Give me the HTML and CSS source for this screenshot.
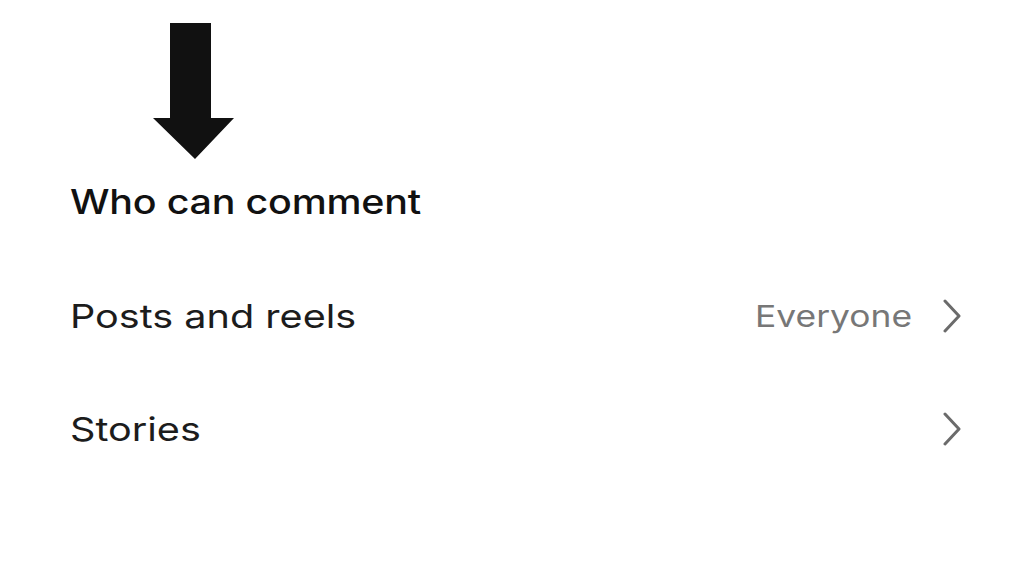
FILE: index.html
```html
<!DOCTYPE html>
<html lang="en">
<head>
<meta charset="utf-8">
<title>Who can comment</title>
<link rel="stylesheet" href="styles.css">
</head>
<body>
<main class="page">
  <div class="arrow-wrap">
    <svg class="arrow" width="82" height="137" viewBox="0 0 82 137" aria-hidden="true">
      <polygon points="17,0 58,0 58,95 81,95 42,136 0,95 17,95" fill="#111"/>
    </svg>
  </div>
  <h2 class="section-title"><span class="stretch">Who can comment</span></h2>
  <ul class="settings">
    <li class="row">
      <span class="label">Posts and reels</span>
      <span class="right">
        <span class="value">Everyone</span>
        <svg class="chev" width="20" height="34" viewBox="0 0 20 34" aria-hidden="true"><polyline points="3,2 17,17 3,32" fill="none" stroke="#6b6b6b" stroke-width="3" stroke-linecap="round" stroke-linejoin="round"/></svg>
      </span>
    </li>
    <li class="row">
      <span class="label">Stories</span>
      <span class="right">
        <svg class="chev" width="20" height="34" viewBox="0 0 20 34" aria-hidden="true"><polyline points="3,2 17,17 3,32" fill="none" stroke="#6b6b6b" stroke-width="3" stroke-linecap="round" stroke-linejoin="round"/></svg>
      </span>
    </li>
  </ul>
</main>
</body>
</html>
```
FILE: styles.css
```css
html, body {
  margin: 0;
  padding: 0;
  background: #fff;
}
body {
  font-family: Inter, "Noto Sans", "Liberation Sans", sans-serif;
  color: #111;
  width: 1024px;
  height: 576px;
  overflow: hidden;
}
.page {
  padding: 0 62px 0 70px;
}
.arrow-wrap {
  padding: 23px 0 0 83px;
  height: 137px;
}
.arrow {
  display: block;
}
.section-title {
  margin: 20px 0 0;
  font-size: 34px;
  font-weight: 500;
  line-height: 44px;
  letter-spacing: -0.2px;
  color: #111;
}
.stretch {
  display: inline-block;
  transform: scaleX(1.16);
  transform-origin: left center;
}
.settings {
  list-style: none;
  margin: 70px 0 0;
  padding: 0;
  display: flex;
  flex-direction: column;
  gap: 69px;
}
.row {
  display: flex;
  align-items: center;
  justify-content: space-between;
  height: 44px;
}
.label {
  display: inline-block;
  font-size: 33px;
  font-weight: 400;
  color: #1c1c1c;
  transform: scaleX(1.2);
  transform-origin: left center;
}
.right {
  display: flex;
  align-items: center;
  gap: 30px;
}
.value {
  display: inline-block;
  font-size: 30px;
  color: #777;
  transform: scaleX(1.18);
  transform-origin: right center;
}
.chev {
  display: block;
}
```
